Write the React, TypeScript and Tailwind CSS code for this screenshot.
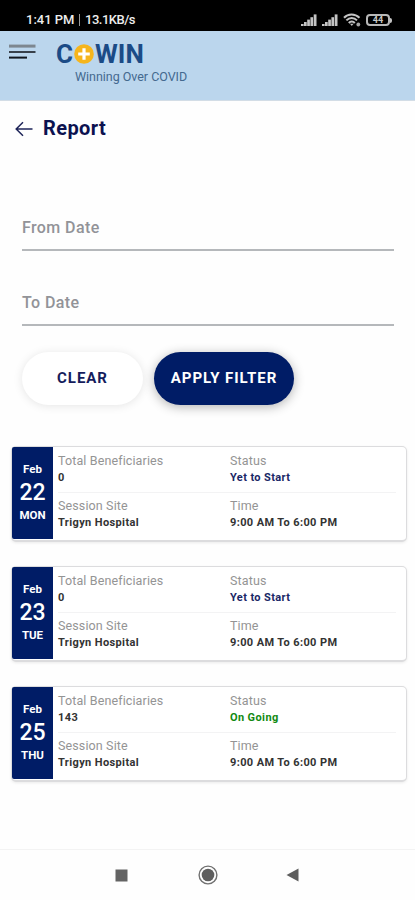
import clsx from "clsx";

interface Session {
    month: string;
    date: number;
    day: string;
    beneficiaries: number;
    status: string;
    site: string;
    time: string;
}

const sessions: Session[] = [
    { month: "Feb", date: 22, day: "MON", beneficiaries: 0, status: "Yet to Start", site: "Trigyn Hospital", time: "9:00 AM To 6:00 PM" },
    { month: "Feb", date: 23, day: "TUE", beneficiaries: 0, status: "Yet to Start", site: "Trigyn Hospital", time: "9:00 AM To 6:00 PM" },
    { month: "Feb", date: 25, day: "THU", beneficiaries: 143, status: "On Going", site: "Trigyn Hospital", time: "9:00 AM To 6:00 PM" },
];

const SignalIcon = () => (
    <svg className="w-4 h-3" viewBox="0 0 16 12" fill="#c4c4c4">
        <rect x="0" y="10" width="2.6" height="2" />
        <rect x="3" y="8" width="2.7" height="4" />
        <rect x="6.2" y="5.6" width="2.7" height="6.4" />
        <rect x="9.4" y="3.2" width="2.7" height="8.8" />
        <rect x="12.7" y="0.4" width="2.8" height="11.6" />
    </svg>
);

const StatusBar = () => (
    <div className="h-[31px] bg-black text-[#ededed] flex items-center justify-between pl-[26px] pr-[23px] pt-[9px] shrink-0">
        <div className="flex items-center text-[13px] leading-4 font-medium whitespace-pre">
            <span className="w-[53px]">1:41 PM</span>
            <span className="w-px h-3 bg-[#9a9a9a] mr-[5px]" />
            <span className="tracking-[-0.5px]">13.1KB/s</span>
        </div>
        <div className="flex items-center">
            <SignalIcon />
            <span className="w-[5px]" />
            <SignalIcon />
            <svg className="w-[18px] h-[14px] ml-[5px]" viewBox="0 0 18 14" fill="none" stroke="#c4c4c4" strokeWidth="2">
                <path d="M1 4.8C5 0.5 12 0.5 16.5 4.8" />
                <path d="M3.4 7.4C6.5 4.2 11 4.2 14 7.4" />
                <path d="M5.8 10C7.5 8 10 8 11.8 10" />
                <path d="M7 10.8L8.8 13L10.6 10.8Z" fill="#c4c4c4" stroke="none" />
                <circle cx="15.3" cy="11.5" r="1.9" fill="#a6a6a6" stroke="none" />
            </svg>
            <div className="ml-[5px] w-[24px] h-[12px] rounded-[4px] border-2 border-[#b8b8b8] flex items-center justify-center text-[9px] leading-none font-bold text-[#c9c9c9]">
                44
            </div>
            <span className="w-[2px] h-[5px] rounded-r-sm bg-[#c4c4c4]" />
        </div>
    </div>
);

const Header = () => (
    <header className="h-[70px] bg-[#bbd6ed] border-b border-[#d3dde6] flex shrink-0">
        <svg className="w-[27px] h-[16px] ml-[9px] mt-[13px]" viewBox="0 0 27 16">
            <rect x="0" y="0.6" width="26.5" height="3" fill="#7d8790" />
            <rect x="0" y="7" width="26.5" height="2" fill="#37404a" />
            <rect x="0" y="12.6" width="18" height="2" fill="#10151c" />
        </svg>
        <div className="ml-[20px] pt-[8px]">
            <div className="flex items-center h-[30px] text-[26px] leading-[30px] font-bold text-[#1b4b86]">
                <span className="w-[18px]">C</span>
                <svg className="w-[20px] h-[20px]" viewBox="0 0 20 20">
                    <circle cx="10" cy="10" r="9.8" fill="#f6b51c" />
                    <path d="M10 4.2V15.8M4.2 10H15.8" stroke="#fff" strokeWidth="3.2" />
                </svg>
                <span className="ml-px tracking-[0.1px]">WIN</span>
            </div>
            <p className="pl-[19px] text-[12.5px] leading-[15px] tracking-[-0.03px] text-[#44698f]">
                Winning Over COVID
            </p>
        </div>
    </header>
);

const DateField = ({ label, className }: { label: string; className?: string }) => (
    <div className={clsx("ml-[22px] mr-[21px] pt-px border-b-2 border-[#b5b8bb] text-[16px] leading-[20px] font-medium text-[#929398] tracking-[0.4px]", className)}>
        {label}
    </div>
);

const Field = ({ label, value, valueClass }: { label: string; value: string | number; valueClass?: string }) => (
    <div>
        <p className="text-[12.5px] leading-[14px] tracking-[0.12px] text-[#949494]">{label}</p>
        <p className={clsx("text-[11px] leading-[14px] mt-[3px] font-bold tracking-[0.38px]", valueClass ?? "text-[#333333]")}>
            {value}
        </p>
    </div>
);

const SessionCard = ({ session }: { session: Session }) => (
    <div className="h-[96px] rounded-[5px] border border-[#dcdcde] border-b-2 bg-white flex shadow-[0_1px_3px_rgba(0,0,0,0.08)]">
        <div className="w-[41px] h-[92px] bg-[#001c66] text-white flex flex-col items-center pt-[15px] rounded-l-[2px]">
            <span className="text-[11.5px] leading-[14px] font-bold">{session.month}</span>
            <span className="text-[23px] leading-[27px] mt-[3px] font-medium">{session.date}</span>
            <span className="text-[11.5px] leading-[14px] mt-[2px] font-bold">{session.day}</span>
        </div>
        <div className="flex-1 pl-[5px] pr-[10px] pt-[7px]">
            <div className="grid grid-cols-[172px_1fr] h-[39px] border-b border-[#f3f3f4]">
                <Field label="Total Beneficiaries" value={session.beneficiaries} />
                <Field
                    label="Status"
                    value={session.status}
                    valueClass={session.status === "On Going" ? "text-[#128a12]" : "text-[#1a2766]"}
                />
            </div>
            <div className="grid grid-cols-[172px_1fr] pt-[6px]">
                <Field label="Session Site" value={session.site} />
                <Field label="Time" value={session.time} />
            </div>
        </div>
    </div>
);

export default function App() {
    return (
        <div className="w-full h-[900px] bg-[#fefefe] flex flex-col overflow-hidden font-['Roboto',sans-serif]">
            <StatusBar />
            <Header />

            {/* Page title */}
            <div className="flex items-center pl-[15px] h-[54px]">
                <svg className="w-[18px] h-[16px] mt-[2px]" viewBox="0 0 18 16" fill="none" stroke="#1e2459" strokeWidth="1.5">
                    <path d="M17.5 8H1.2M8 1.2L1.2 8L8 14.8" />
                </svg>
                <h1 className="ml-[10px] text-[20px] leading-6 font-bold tracking-[0.4px] text-[#0c1250]">Report</h1>
            </div>

            <DateField label="From Date" className="mt-[62px] h-[34px]" />
            <DateField label="To Date" className="mt-[41px] h-[34px]" />

            {/* Filter actions */}
            <div className="flex gap-[11px] mt-[26px] pl-[22px] text-[15px] font-bold tracking-[0.95px]">
                <button className="w-[121px] h-[53px] rounded-full bg-white text-[#151c5c] shadow-[0_1px_10px_rgba(0,0,0,0.1)]">
                    CLEAR
                </button>
                <button className="w-[140px] h-[53px] rounded-full bg-[#001c66] text-white shadow-[0_2px_11px_rgba(0,0,0,0.3)]">
                    APPLY FILTER
                </button>
            </div>

            <div className="flex flex-col gap-[24px] mt-[41px] pl-[11px] pr-[8px]">
                {sessions.map((session) => (
                    <SessionCard key={session.date} session={session} />
                ))}
            </div>

            {/* System navigation */}
            <nav className="mt-auto h-[51px] border-t border-[#f3f3f3] flex items-center pl-[115px]">
                <svg className="w-[13px] h-[13px]" viewBox="0 0 13 13">
                    <rect x="0.5" y="0.5" width="12" height="12" fill="#636363" />
                </svg>
                <svg className="w-[20px] h-[20px] ml-[70px]" viewBox="0 0 20 20">
                    <circle cx="10" cy="10" r="8.9" fill="none" stroke="#707070" strokeWidth="1.4" />
                    <circle cx="10" cy="10" r="6.3" fill="#5e5e5e" />
                </svg>
                <svg className="w-[13px] h-[14px] ml-[68px]" viewBox="0 0 13 14">
                    <path d="M12.5 0.5V13.5L0.5 7Z" fill="#5e5e5e" />
                </svg>
            </nav>
        </div>
    );
}
